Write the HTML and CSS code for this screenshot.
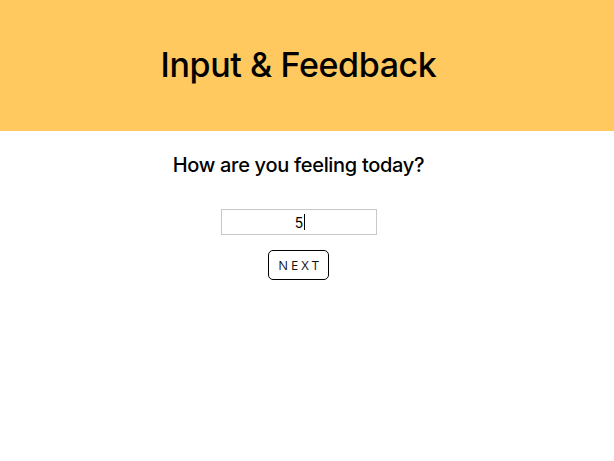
FILE: index.html
```html
<!DOCTYPE html>
<html>
<head>
<meta charset="utf-8">
<link rel="stylesheet" href="styles.css">
</head>
<body>
<div class="page">
  <header class="hero">
    <h1 class="title">Input &amp; Feedback</h1>
  </header>
  <main class="content">
    <p class="question">How are you feeling today?</p>
    <div class="answer" role="textbox" aria-label="answer"><span class="value">5</span><span class="caret"></span></div>
    <button class="next">NEXT</button>
  </main>
</div>
</body>
</html>
```
FILE: styles.css
```css
html, body {
  margin: 0;
  padding: 0;
  background: #fff;
}
body {
  font-family: "Inter", "Noto Sans", sans-serif;
  color: #000;
}
.page {
  width: 100%;
}
.hero {
  background: #ffc960;
  height: 131px;
  display: flex;
  align-items: center;
  justify-content: center;
  padding-right: 17px;
  box-sizing: border-box;
}
.title {
  margin: 0;
  font-size: 34px;
  font-weight: 500;
  letter-spacing: -0.4px;
  padding-bottom: 3px;
}
.content {
  display: flex;
  flex-direction: column;
  align-items: center;
  padding-right: 17px;
}
.question {
  margin: 22px 0 0;
  font-size: 20px;
  font-weight: 500;
  line-height: 24px;
  letter-spacing: -0.3px;
}
.answer {
  margin-top: 32px;
  width: 156px;
  height: 26px;
  box-sizing: border-box;
  border: 1px solid #c8c8c8;
  display: flex;
  align-items: center;
  justify-content: center;
  font-size: 14px;
  padding-left: 3px;
}
.caret {
  width: 1px;
  height: 16px;
  background: #000;
  margin-left: 1px;
}
.next {
  margin-top: 15px;
  width: 61px;
  height: 30px;
  box-sizing: border-box;
  background: #fff;
  border: 1px solid #000;
  border-radius: 5px;
  font-family: "Open Sans", sans-serif;
  font-size: 13px;
  font-weight: 500;
  letter-spacing: 3px;
  padding: 0 0 0 3px;
  color: #111;
}
```
